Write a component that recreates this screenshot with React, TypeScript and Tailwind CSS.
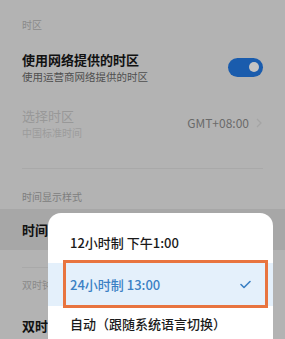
import React from "react";

const font = { fontFamily: '"Noto Sans CJK SC", "Noto Sans", sans-serif' };

const App: React.FC = () => {
  return (
    <div className="relative w-[285px] h-[339px] overflow-hidden bg-[#b3b3b3]" style={font}>
      {/* 时区 */}
      <div className="px-[22px] pt-[18px]">
        <div className="text-[10px] leading-[14px] text-[#8a8a8a]">时区</div>

        <div className="mt-[18px] flex items-center justify-between">
          <div>
            <div className="text-[13px] leading-[20px] font-bold text-[#111]">使用网络提供的时区</div>
            <div className="text-[10.5px] leading-[14px] text-[#4f4f4f]">使用运营商网络提供的时区</div>
          </div>
          <div className="w-[35px] h-[19px] rounded-full bg-[#1a5cad] flex items-center justify-end pr-[4px]">
            <div className="w-[10px] h-[10px] rounded-full bg-[#c4c4c4]" />
          </div>
        </div>

        <div className="mt-[22px] flex items-center justify-between">
          <div>
            <div className="text-[13px] leading-[20px] text-[#989898]">选择时区</div>
            <div className="text-[10px] leading-[14px] text-[#9c9c9c]">中国标准时间</div>
          </div>
          <div className="flex items-center gap-[7px] pr-[1px] text-[12px] text-[#6a6a6a]">
            <span>GMT+08:00</span>
            <svg width="6" height="10" viewBox="0 0 6 10" fill="none">
              <path d="M1 1l4 4-4 4" stroke="#a4a4a4" strokeWidth="1.2" />
            </svg>
          </div>
        </div>

        <div className="mt-[28px] h-px bg-[#a9a9a9]" />

        <div className="mt-[21px] text-[10px] leading-[14px] text-[#7e7e7e]">时间显示样式</div>
      </div>

      {/* pressed row */}
      <div className="mt-[5px] h-[41px] bg-[#a7a7a7] px-[22px] flex items-center">
        <span className="text-[13px] font-bold text-[#111]">时间</span>
      </div>

      <div className="px-[22px]">
        <div className="mt-[17px] h-px bg-[#a9a9a9]" />
        <div className="mt-[10px] text-[10px] leading-[14px] text-[#8a8a8a]">双时钟</div>
        <div className="mt-[24px] text-[13px] leading-[20px] font-bold text-[#111]">双时钟</div>
      </div>

      {/* popup menu */}
      <div className="absolute left-[48px] top-[213px] w-[225px] h-[140px] bg-white rounded-[13px] pt-[9px]">
        <div className="h-[41px] flex items-center pl-[22px] text-[13px] font-medium text-[#1a1a1a]">
          12小时制 下午1:00
        </div>
        <div className="relative h-[43px] bg-[#e4f0fb] flex items-center justify-between pl-[22px] pr-[22px]">
          <span className="text-[13px] font-medium text-[#3a80c4]">24小时制 13:00</span>
          <svg width="11" height="9" viewBox="0 0 11 9" fill="none">
            <path d="M1 4.5l3 3L10 1.5" stroke="#3a80c4" strokeWidth="1.6" strokeLinecap="round" strokeLinejoin="round" />
          </svg>
          <div className="absolute left-[15px] top-[-3px] w-[205px] h-[48px] border-[3px] border-[#e8743f]" />
        </div>
        <div className="h-[36px] flex items-center pl-[22px] text-[13px] font-medium text-[#1a1a1a]">
          自动（跟随系统语言切换）
        </div>
      </div>
    </div>
  );
};

export default App;
